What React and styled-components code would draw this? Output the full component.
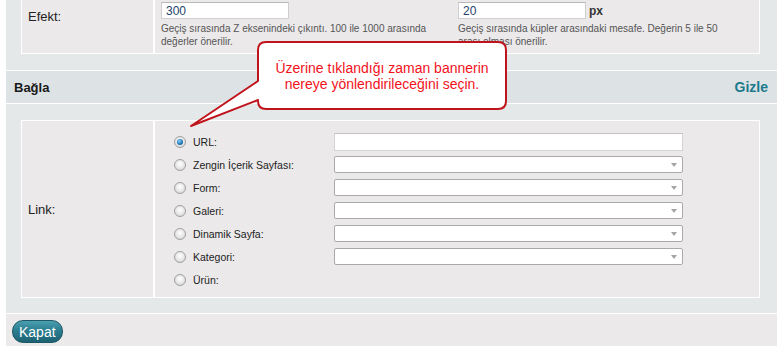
import { createGlobalStyle } from "styled-components";
import styled from "styled-components";

const GlobalStyle = createGlobalStyle`
  html, body {
    margin: 0;
    padding: 0;
    background: #ffffff;
  }
  body {
    font-family: "Liberation Sans", Arial, sans-serif;
    color: #1d1d1d;
  }
`;

const Page = styled.div`
  position: relative;
  margin: 0 3px 0 6px;
  background-color: #e5e8e9;
  height: 346px;
  overflow: hidden;
`;

const Section = styled.div`
  padding: ${(p) => p.$pad};
`;

const Table = styled.div`
  display: grid;
  grid-template-columns: 131px 1fr;
  column-gap: 2px;
  background-color: #ffffff;
  padding: ${(p) => (p.$top ? "1px 1px 1px 1px" : "0 1px 1px 1px")};
`;

const LabelCell = styled.div`
  background-color: #ebe9ea;
  display: flex;
  align-items: ${(p) => (p.$top ? "flex-start" : "center")};
  padding: ${(p) => (p.$top ? "9px 0 0 6px" : "0 0 0 6px")};
  font-size: 13px;
  color: #222;
`;

const ValueCell = styled.div`
  background-color: #ebe9ea;
  padding: ${(p) => p.$pad};
`;

const TwoCols = styled.div`
  display: grid;
  grid-template-columns: 297px 300px;
`;

const Field = styled.div`
  display: flex;
  flex-direction: column;
`;

const InputRow = styled.div`
  display: flex;
  align-items: center;
  gap: 3px;
`;

const SmallInput = styled.input`
  box-sizing: border-box;
  width: 128px;
  height: 17px;
  border: 1px solid #cfcfcf;
  border-top-color: #b9b9b9;
  background: #fff;
  padding: 0 4px;
  font-family: "Liberation Sans", Arial, sans-serif;
  font-size: 12px;
  color: #24446c;
  outline: none;
`;

const Unit = styled.span`
  font-size: 12px;
  font-weight: bold;
  color: #333;
`;

const Help = styled.p`
  margin: 3px 0 0;
  font-size: 10px;
  line-height: 13px;
  color: #555;
  width: ${(p) => p.$w}px;
`;

const Header = styled.div`
  display: flex;
  align-items: center;
  justify-content: space-between;
  height: 32px;
  padding: 0 9px 0 8px;
  background-color: #dde2e4;
  border-top: 1px solid #ffffff;
  border-bottom: 1px solid #ffffff;
`;

const HeaderTitle = styled.span`
  font-size: 13px;
  font-weight: bold;
  color: #1a1a1a;
`;

const HeaderLink = styled.a`
  font-size: 14px;
  font-weight: bold;
  color: #1b7a8c;
  text-decoration: none;
  cursor: pointer;
`;

const OptionList = styled.div`
  display: flex;
  flex-direction: column;
`;

const OptionRow = styled.label`
  display: grid;
  grid-template-columns: 160px 349px;
  align-items: center;
  height: 23px;
`;

const RadioLabel = styled.span`
  display: flex;
  align-items: center;
  gap: 7px;
  font-size: 10.5px;
  color: #222;
`;

const Radio = styled.span`
  box-sizing: border-box;
  width: 12px;
  height: 12px;
  border-radius: 50%;
  border: 1px solid #a0a0a0;
  background: radial-gradient(circle at 50% 40%, #ffffff 0%, #e6e6e6 55%, #cdcdcd 100%);
  display: flex;
  align-items: center;
  justify-content: center;

  &::after {
    content: "";
    display: ${(p) => (p.$checked ? "block" : "none")};
    width: 6px;
    height: 6px;
    border-radius: 50%;
    background: radial-gradient(circle at 40% 35%, #8fd0f5 0%, #1e78b8 55%, #0c3f6e 100%);
  }
`;

const TextInput = styled.input`
  box-sizing: border-box;
  width: 349px;
  height: 18px;
  border: 1px solid #d4d4d4;
  border-top-color: #c2c2c2;
  background: #fff;
  outline: none;
`;

const SelectBox = styled.div`
  position: relative;
  box-sizing: border-box;
  width: 349px;
  height: 17px;
  border: 1px solid #aaaaaa;
  border-radius: 2px;
  background: #fff;

  &::after {
    content: "";
    position: absolute;
    right: 5px;
    top: 6px;
    border-left: 3.5px solid transparent;
    border-right: 3.5px solid transparent;
    border-top: 4px solid #a5a5a5;
  }
`;

const Footer = styled.div`
  border-top: 1px solid #ffffff;
  background-color: #ebe9ea;
  padding: 6px 6px;
  height: 34px;
  box-sizing: border-box;
`;

const Button = styled.button`
  height: 23px;
  padding: 0 6px;
  border: 1px solid #1d5866;
  border-radius: 11px;
  background: linear-gradient(#4a9fb0 0%, #2b7e90 45%, #1d6273 100%);
  color: #ffffff;
  font-family: "Liberation Sans", Arial, sans-serif;
  font-size: 14px;
  cursor: pointer;
`;

const Callout = styled.div`
  position: absolute;
  left: 182px;
  top: 40px;
  width: 330px;
  height: 92px;
  pointer-events: none;
`;

const CalloutText = styled.div`
  position: absolute;
  left: 70px;
  top: 2px;
  width: 248px;
  height: 67px;
  display: flex;
  align-items: center;
  justify-content: center;
  text-align: center;
  font-size: 14px;
  line-height: 16px;
  color: #f2121c;
`;

const options = [
  { label: "URL:", kind: "text", checked: true },
  { label: "Zengin İçerik Sayfası:", kind: "select" },
  { label: "Form:", kind: "select" },
  { label: "Galeri:", kind: "select" },
  { label: "Dinamik Sayfa:", kind: "select" },
  { label: "Kategori:", kind: "select" },
  { label: "Ürün:", kind: "none" },
];

export default function App() {
  return (
    <>
      <GlobalStyle />
      <Page>
        <Section $pad="0 17px 16px 15px">
          <Table>
            <LabelCell $top>Efekt:</LabelCell>
            <ValueCell $pad="2px 0 5px 6px">
              <TwoCols>
                <Field>
                  <SmallInput defaultValue="300" />
                  <Help $w={290}>
                    Geçiş sırasında Z eksenindeki çıkıntı. 100 ile 1000 arasında
                    değerler önerilir.
                  </Help>
                </Field>
                <Field>
                  <InputRow>
                    <SmallInput defaultValue="20" />
                    <Unit>px</Unit>
                  </InputRow>
                  <Help $w={274}>
                    Geçiş sırasında küpler arasındaki mesafe. Değerin 5 ile 50
                    arası olması önerilir.
                  </Help>
                </Field>
              </TwoCols>
            </ValueCell>
          </Table>
        </Section>

        <Header>
          <HeaderTitle>Bağla</HeaderTitle>
          <HeaderLink>Gizle</HeaderLink>
        </Header>

        <Section $pad="16px 17px 15px 15px">
          <Table $top>
            <LabelCell>Link:</LabelCell>
            <ValueCell $pad="9px 0 6px 19px">
              <OptionList>
                {options.map((o) => (
                  <OptionRow key={o.label}>
                    <RadioLabel>
                      <Radio $checked={o.checked} />
                      {o.label}
                    </RadioLabel>
                    {o.kind === "text" && <TextInput />}
                    {o.kind === "select" && <SelectBox />}
                  </OptionRow>
                ))}
              </OptionList>
            </ValueCell>
          </Table>
        </Section>

        <Footer>
          <Button>Kapat</Button>
        </Footer>

        <Callout>
          <svg width="330" height="92" viewBox="0 0 330 92">
            <path
              d="M78 2 H310 Q318 2 318 10 V61 Q318 69 310 69 H78 Q70 69 70 61 V60 L3 86 L70 41 V10 Q70 2 78 2 Z"
              fill="#ffffff"
              stroke="#c0141c"
              strokeWidth="2"
              strokeLinejoin="round"
            />
          </svg>
          <CalloutText>
            Üzerine tıklandığı zaman bannerin
            <br />
            nereye yönlendirileceğini seçin.
          </CalloutText>
        </Callout>
      </Page>
    </>
  );
}
